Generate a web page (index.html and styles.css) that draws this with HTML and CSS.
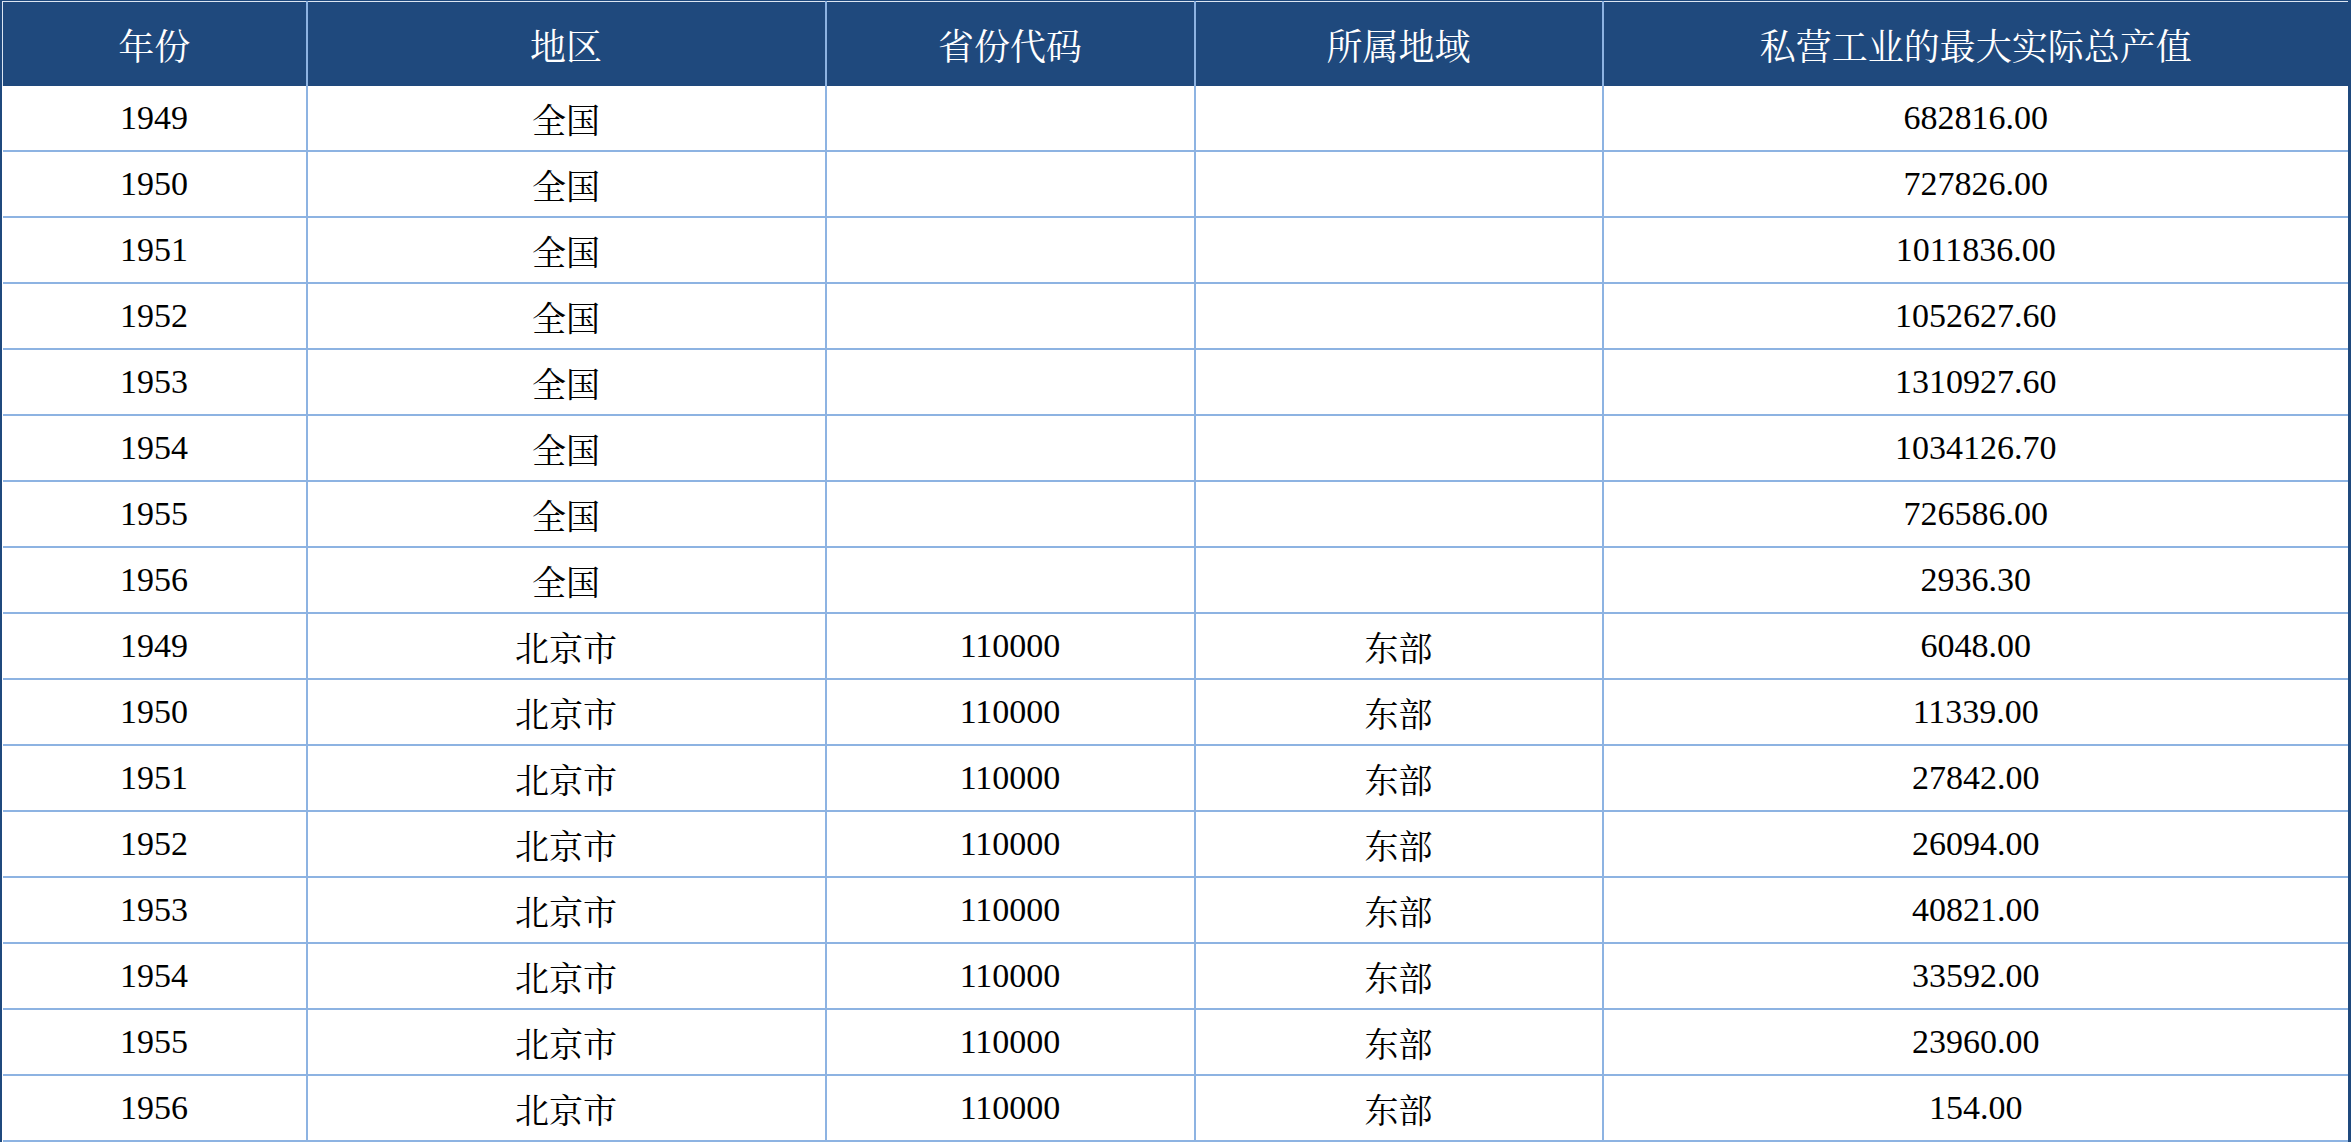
FILE: index.html
```html
<!DOCTYPE html>
<html lang="zh-CN">
<head>
<meta charset="utf-8">
<title>私营工业的最大实际总产值</title>
<link rel="stylesheet" href="styles.css">
</head>
<body>
<div class="frame">
<table class="data">
<colgroup>
<col class="c1"><col class="c2"><col class="c3"><col class="c4"><col class="c5">
</colgroup>
<thead>
<tr><th>年份</th><th>地区</th><th>省份代码</th><th>所属地域</th><th>私营工业的最大实际总产值</th></tr>
</thead>
<tbody>
<tr><td>1949</td><td>全国</td><td></td><td></td><td>682816.00</td></tr>
<tr><td>1950</td><td>全国</td><td></td><td></td><td>727826.00</td></tr>
<tr><td>1951</td><td>全国</td><td></td><td></td><td>1011836.00</td></tr>
<tr><td>1952</td><td>全国</td><td></td><td></td><td>1052627.60</td></tr>
<tr><td>1953</td><td>全国</td><td></td><td></td><td>1310927.60</td></tr>
<tr><td>1954</td><td>全国</td><td></td><td></td><td>1034126.70</td></tr>
<tr><td>1955</td><td>全国</td><td></td><td></td><td>726586.00</td></tr>
<tr><td>1956</td><td>全国</td><td></td><td></td><td>2936.30</td></tr>
<tr><td>1949</td><td>北京市</td><td>110000</td><td>东部</td><td>6048.00</td></tr>
<tr><td>1950</td><td>北京市</td><td>110000</td><td>东部</td><td>11339.00</td></tr>
<tr><td>1951</td><td>北京市</td><td>110000</td><td>东部</td><td>27842.00</td></tr>
<tr><td>1952</td><td>北京市</td><td>110000</td><td>东部</td><td>26094.00</td></tr>
<tr><td>1953</td><td>北京市</td><td>110000</td><td>东部</td><td>40821.00</td></tr>
<tr><td>1954</td><td>北京市</td><td>110000</td><td>东部</td><td>33592.00</td></tr>
<tr><td>1955</td><td>北京市</td><td>110000</td><td>东部</td><td>23960.00</td></tr>
<tr><td>1956</td><td>北京市</td><td>110000</td><td>东部</td><td>154.00</td></tr>
</tbody>
</table>
</div>
</body>
</html>
```

FILE: styles.css
```css
html, body {
  margin: 0;
  padding: 0;
  background: #ffffff;
}

.frame {
  width: 2351px;
  height: 1142px;
  box-sizing: border-box;
  border-left: 2px solid #1f497d;
  border-right: 3px solid #1f497d;
  border-top: 1px solid #1f497d;
  overflow: hidden;
}

.data {
  width: 100%;
  table-layout: fixed;
  border-collapse: collapse;
  font-family: "Liberation Serif", "Noto Serif CJK SC", "Noto Sans CJK SC", serif;
  color: #000000;
}

.c1 { width: 304px; }
.c2 { width: 519px; }
.c3 { width: 369px; }
.c4 { width: 408px; }

.data th {
  height: 84px;
  padding: 0;
  background: #1f497d;
  color: #ffffff;
  font-size: 36px;
  font-weight: normal;
  text-align: center;
  vertical-align: middle;
  border-left: 2px solid #8db3e2;
  border-right: 2px solid #8db3e2;
  border-top: 1px solid #dce6f2;
  border-bottom: 0;
}

.data th:first-child { border-left: 1px solid #dce6f2; }
.data th:last-child { border-right: 0; }

.data td {
  height: 64px;
  padding: 0;
  font-size: 34px;
  text-align: center;
  vertical-align: middle;
  border: 2px solid #8db3e2;
}

.data tbody tr:first-child td { border-top: 0; }
.data td:first-child { border-left: 0; }
.data td:last-child { border-right: 0; }
```
